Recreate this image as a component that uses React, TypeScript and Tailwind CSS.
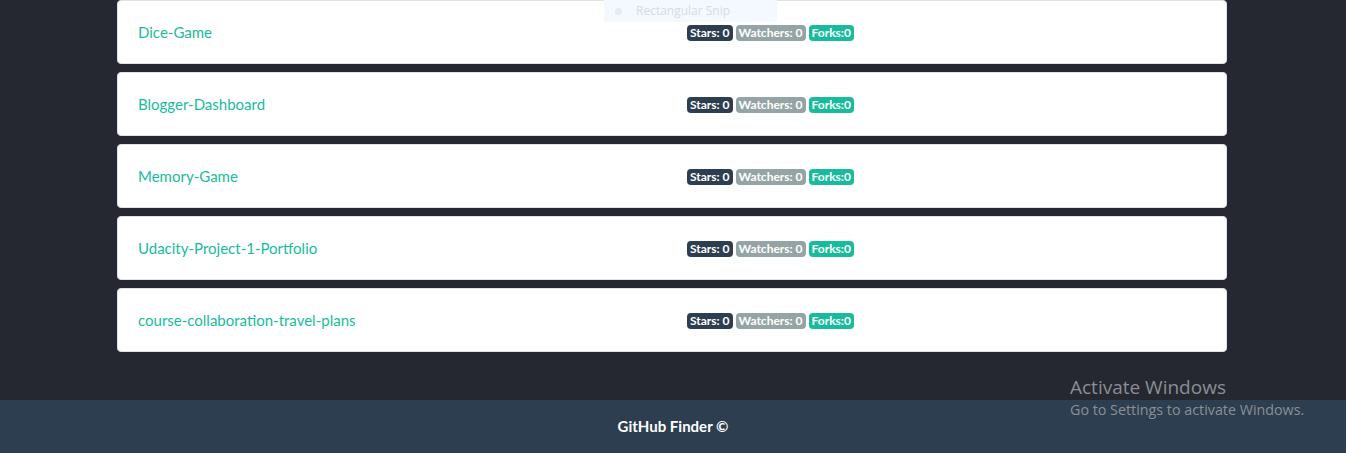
import React from "react";

const repos = [
  "Dice-Game",
  "Blogger-Dashboard",
  "Memory-Game",
  "Udacity-Project-1-Portfolio",
  "course-collaboration-travel-plans",
];

export default function App() {
  return (
    <div
      className="relative min-h-[453px] bg-[#252831] flex flex-col"
      style={{ fontFamily: "Lato, 'Open Sans', sans-serif" }}
    >
      <main className="w-[1110px] ml-[117px] flex flex-col gap-2 mb-12">
        {repos.map((name) => (
          <div
            key={name}
            className="h-[64px] bg-white border border-[#dfe2e6] rounded-[4px] px-5 grid grid-cols-2 gap-[30px] items-center"
          >
            <a className="text-[15px] leading-[22px] text-[#18bc9c]">{name}</a>
            <div className="flex items-center gap-[3px] mt-[2px] text-[12px] font-bold leading-none text-white">
              <span className="h-[16px] flex items-center bg-[#2c3e50] rounded-[4px] px-[3px]">Stars: 0</span>
              <span className="h-[16px] flex items-center bg-[#95a5a6] rounded-[4px] px-[3px]">Watchers: 0</span>
              <span className="h-[16px] flex items-center bg-[#18bc9c] rounded-[4px] px-[3px]">Forks:0</span>
            </div>
          </div>
        ))}
      </main>
      <footer className="h-[53px] bg-[#2c3e50] flex items-center justify-center">
        <span className="text-white font-bold text-[15px]">GitHub Finder ©</span>
      </footer>

      <div className="absolute left-[604px] top-0 w-[173px] h-[22px] bg-[#f3f9fe] flex items-center">
        <span className="ml-[11px] w-[7px] h-[7px] rounded-full bg-[#e6ebef]" />
        <span
          className="ml-[14px] text-[12px] text-[#d6dbe0]"
          style={{ fontFamily: "'Open Sans', sans-serif" }}
        >
          Rectangular Snip
        </span>
      </div>

      <div
        className="absolute left-[1070px] top-[374px] text-[#8b8e94] pointer-events-none"
        style={{ fontFamily: "'Open Sans', 'Noto Sans', sans-serif" }}
      >
        <div className="text-[19px] leading-[26px]">Activate Windows</div>
        <div className="text-[14.3px] leading-[19px]">Go to Settings to activate Windows.</div>
      </div>
    </div>
  );
}
